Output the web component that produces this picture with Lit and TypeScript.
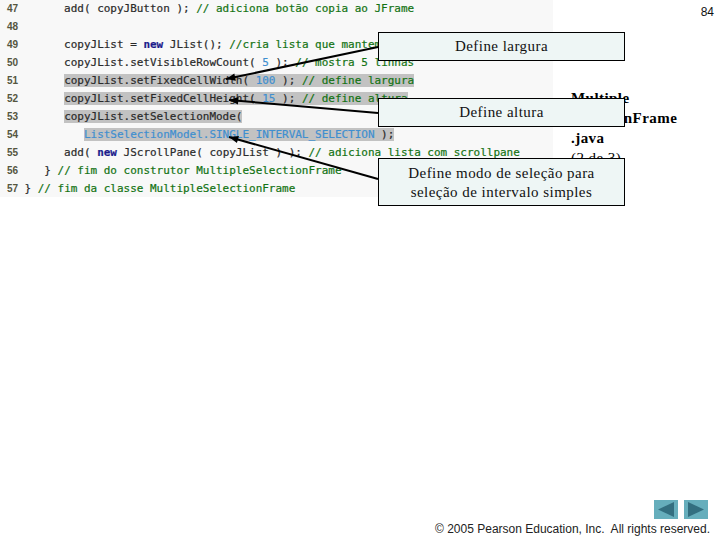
import { LitElement, html, css, svg } from "lit";
import { customElement } from "lit/decorators.js";

const rows: [string, unknown][] = [
  ["47", html`      add( copyJButton ); <i>// adiciona botão copia ao JFrame</i>`],
  ["48", html``],
  ["49", html`      copyJList = <b>new</b> JList(); <i>//cria lista que mantem copias</i>`],
  ["50", html`      copyJList.setVisibleRowCount( <u>5</u> ); <i>// mostra 5 linhas</i>`],
  ["51", html`      <mark>copyJList.setFixedCellWidth( <u>100</u> ); <i>// define largura</i></mark>`],
  ["52", html`      <mark>copyJList.setFixedCellHeight( <u>15</u> ); <i>// define altura</i></mark>`],
  ["53", html`      <mark>copyJList.setSelectionMode(</mark>`],
  ["54", html`         <mark><u>ListSelectionModel.SINGLE_INTERVAL_SELECTION</u> );</mark>`],
  ["55", html`      add( <b>new</b> JScrollPane( copyJList ) ); <i>// adiciona lista com scrollpane</i>`],
  ["56", html`   } <i>// fim do construtor MultipleSelectionFrame</i>`],
  ["57", html`} <i>// fim da classe MultipleSelectionFrame</i>`],
];

const arrows = [
  [378, 47, 226, 79],
  [378, 113, 229, 100],
  [378, 179, 229, 137],
];

function arrow(x1: number, y1: number, x2: number, y2: number) {
  const a = Math.atan2(y1 - y2, x1 - x2);
  const l = 10;
  const w = 0.38;
  const p = (s: number) => `${x2 + l * Math.cos(a + s)},${y2 + l * Math.sin(a + s)}`;
  return svg`<line x1=${x1} y1=${y1} x2=${x2} y2=${y2} stroke="#000" stroke-width="2"></line>
    <polygon points="${x2},${y2} ${p(w)} ${p(-w)}" fill="#000"></polygon>`;
}

@customElement("app-root")
export class AppRoot extends LitElement {
  static styles = css`
    :host {
      display: flex;
      flex-direction: column;
      width: 720px;
      height: 540px;
      position: relative;
      overflow: hidden;
      background: #fff;
      font-family: "Liberation Serif", serif;
    }
    .top {
      display: flex;
      align-items: flex-start;
    }
    .code {
      width: 553px;
      height: 197px;
      flex: none;
      box-sizing: border-box;
      background: #f8f8f8;
      overflow: hidden;
    }
    .row {
      display: grid;
      grid-template-columns: 24.5px 1fr;
      height: 18px;
      line-height: 18px;
      margin-top: -0.05px;
    }
    .row:first-child {
      margin-top: -0.5px;
      margin-bottom: 0.5px;
    }
    .num {
      font: bold 10px/18px "Liberation Sans", sans-serif;
      color: #55553f;
      padding-left: 7px;
    }
    .src {
      font-family: "DejaVu Sans Mono", monospace;
      font-size: 10.98px;
      white-space: pre;
      color: #2a2a2a;
      -webkit-text-stroke: 0.2px currentColor;
    }
    .src i {
      font-style: normal;
      color: #137313;
    }
    .src b {
      font-weight: bold;
      color: #1c1c8c;
    }
    .src u {
      text-decoration: none;
      color: #3f8fd0;
    }
    .src mark {
      background: #c2c2c2;
      color: #2a2a2a;
    }
    .side {
      flex: 1;
      display: flex;
      flex-direction: column;
    }
    .page {
      align-self: flex-end;
      margin: 5px 6px 0 0;
      font: 12px/14px "Liberation Sans", sans-serif;
      color: #111;
    }
    .title {
      margin: 69px 0 0 18px;
      font-weight: bold;
      font-size: 15px;
      line-height: 20px;
      letter-spacing: 0.45px;
      color: #000;
    }
    .title div:last-child {
      font-weight: normal;
    }
    .bottom {
      margin-top: auto;
      display: flex;
      flex-direction: column;
      align-items: flex-end;
      padding: 0 10px 4px 0;
      gap: 3px;
    }
    .nav {
      display: flex;
      gap: 6px;
      margin-right: 2px;
    }
    .btn {
      display: block;
      width: 24px;
      height: 19px;
      background: #66aebc;
    }
    .copy {
      font: 12px/14px "Liberation Sans", sans-serif;
      color: #222;
      white-space: pre;
    }
    .arrows {
      position: absolute;
      left: 0;
      top: 0;
      width: 720px;
      height: 540px;
    }
    .call {
      position: absolute;
      left: 378px;
      width: 247px;
      box-sizing: border-box;
      border: 1px solid #000;
      background: #eef6f5;
      display: flex;
      align-items: center;
      justify-content: center;
      text-align: center;
      font-size: 15px;
      line-height: 19px;
      letter-spacing: 0.46px;
      color: #111;
    }
    .c1 { top: 32px; height: 29px; }
    .c2 { top: 98px; height: 29px; }
    .c3 { top: 158px; height: 48px; padding-top: 1px; }
  `;

  render() {
    return html`
      <div class="top">
        <div class="code">
          ${rows.map(([n, c]) => html`<div class="row"><span class="num">${n}</span><span class="src">${c}</span></div>`)}
        </div>
        <div class="side">
          <div class="page">84</div>
          <div class="title">
            <div>Multiple</div>
            <div>SelectionFrame</div>
            <div>.java</div>
            <div>(2 de 3)</div>
          </div>
        </div>
      </div>
      <div class="bottom">
        <div class="nav">
          <svg class="btn" viewBox="0 0 24 19"><polygon points="4,9.5 20,2 20,17" fill="#336f80"></polygon></svg>
          <svg class="btn" viewBox="0 0 24 19"><polygon points="20,9.5 4,2 4,17" fill="#336f80"></polygon></svg>
        </div>
        <div class="copy">© 2005 Pearson Education, Inc.  All rights reserved.</div>
      </div>
      <svg class="arrows" viewBox="0 0 720 540">${arrows.map(([a, b, c, d]) => arrow(a, b, c, d))}</svg>
      <div class="call c1">Define largura</div>
      <div class="call c2">Define altura</div>
      <div class="call c3">Define modo de seleção para<br />seleção de intervalo simples</div>
    `;
  }
}
